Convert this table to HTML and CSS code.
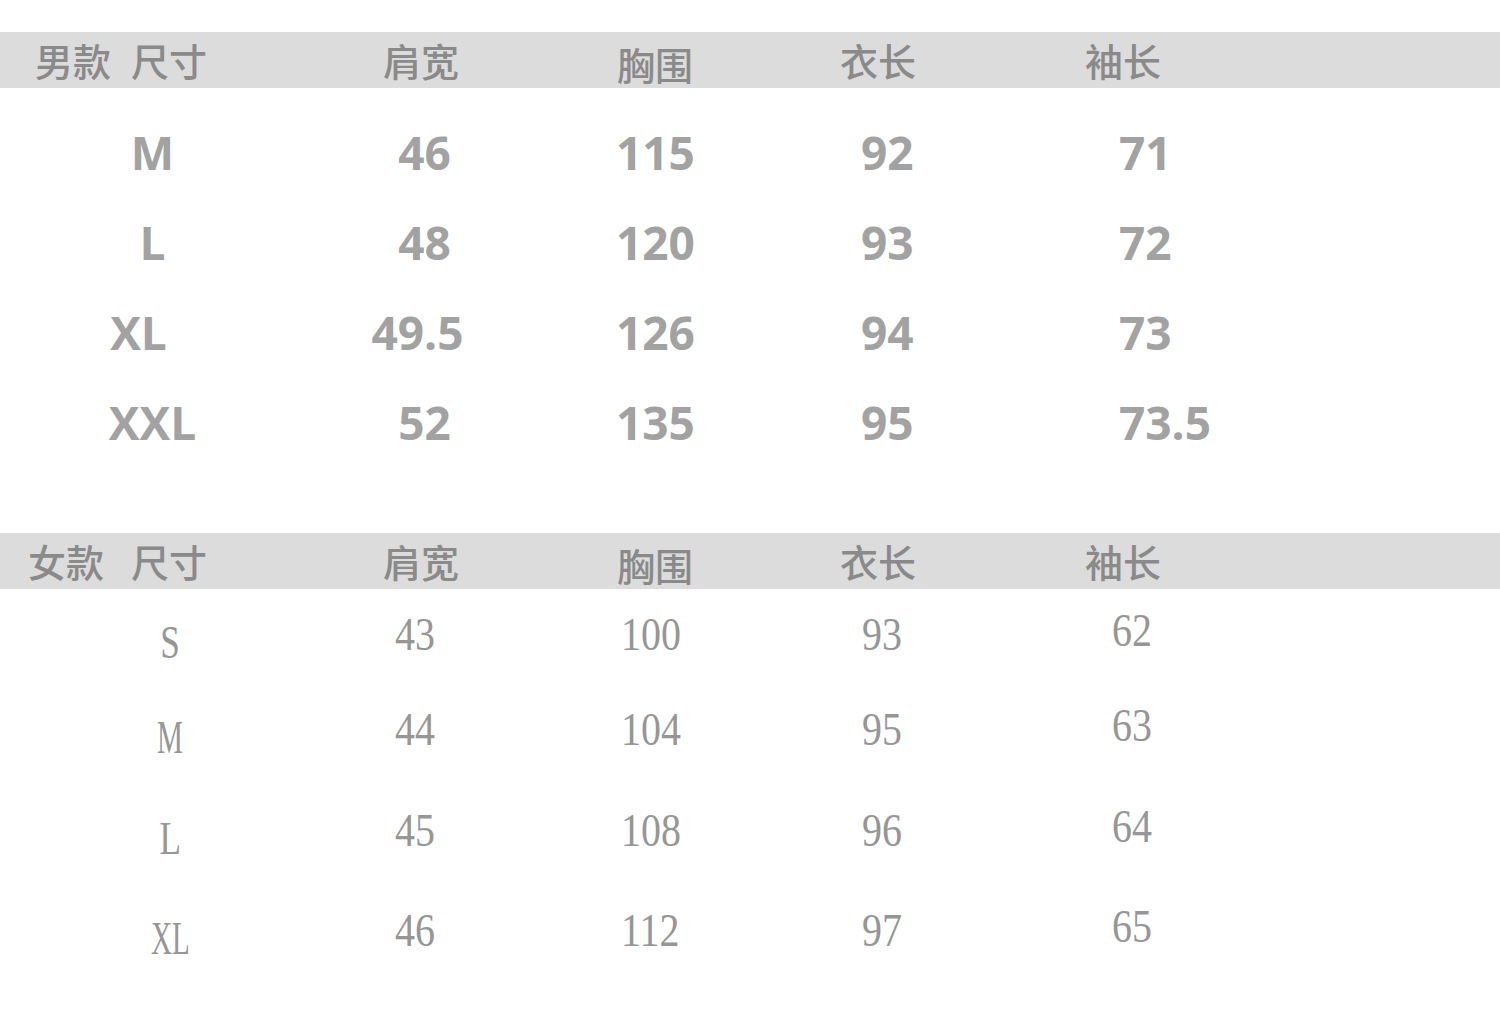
FILE: index.html
```html
<!DOCTYPE html>
<html lang="zh">
<head>
<meta charset="utf-8">
<title>尺码表</title>
<link rel="stylesheet" href="styles.css">
</head>
<body>
<main class="chart">
  <section class="table men">
    <div class="head">
      <div class="h-label"><span>男款</span><span>尺寸</span></div>
      <div class="h">肩宽</div>
      <div class="h h-low">胸围</div>
      <div class="h">衣长</div>
      <div class="h">袖长</div>
    </div>
    <div class="grid men-grid">
      <div class="c c1">M</div><div class="c c2">46</div><div class="c c3">115</div><div class="c c4">92</div><div class="c c5">71</div>
      <div class="c c1">L</div><div class="c c2">48</div><div class="c c3">120</div><div class="c c4">93</div><div class="c c5">72</div>
      <div class="c c1 xl">XL</div><div class="c c2 dec">49.5</div><div class="c c3">126</div><div class="c c4">94</div><div class="c c5">73</div>
      <div class="c c1">XXL</div><div class="c c2">52</div><div class="c c3">135</div><div class="c c4">95</div><div class="c c5">73.5</div>
    </div>
  </section>

  <section class="table women">
    <div class="head">
      <div class="h-label w-label"><span>女款</span><span>尺寸</span></div>
      <div class="h">肩宽</div>
      <div class="h h-low">胸围</div>
      <div class="h">衣长</div>
      <div class="h">袖长</div>
    </div>
    <div class="grid women-grid">
      <div class="c c1"><span class="t let wide">S</span></div><div class="c c2"><span class="t">43</span></div><div class="c c3"><span class="t">100</span></div><div class="c c4"><span class="t">93</span></div><div class="c c5"><span class="t">62</span></div>
      <div class="c c1"><span class="t let">M</span></div><div class="c c2"><span class="t">44</span></div><div class="c c3"><span class="t">104</span></div><div class="c c4"><span class="t">95</span></div><div class="c c5"><span class="t">63</span></div>
      <div class="c c1"><span class="t let wide">L</span></div><div class="c c2"><span class="t">45</span></div><div class="c c3"><span class="t">108</span></div><div class="c c4"><span class="t">96</span></div><div class="c c5"><span class="t">64</span></div>
      <div class="c c1"><span class="t let">XL</span></div><div class="c c2"><span class="t">46</span></div><div class="c c3"><span class="t">112</span></div><div class="c c4"><span class="t">97</span></div><div class="c c5"><span class="t">65</span></div>
    </div>
  </section>
</main>
</body>
</html>
```

FILE: styles.css
```css
html, body {
  margin: 0;
  padding: 0;
  background: #ffffff;
}

body {
  width: 1500px;
  height: 1030px;
  overflow: hidden;
  font-family: "Open Sans", "Noto Sans CJK SC", sans-serif;
}

.chart {
  padding-top: 32px;
  display: flex;
  flex-direction: column;
}

.women {
  margin-top: 66px;
}

/* header band */
.head {
  height: 56px;
  background: #dcdcdc;
  display: grid;
  grid-template-columns: 383px 234px 223px 245px 1fr;
  align-items: center;
  font-family: "Noto Sans CJK SC", sans-serif;
  font-weight: 500;
  font-size: 38px;
  line-height: 1;
  color: #8a8a8a;
}

.h-label {
  display: flex;
  gap: 20px;
  padding-left: 35px;
}

.w-label {
  padding-left: 28px;
  gap: 27px;
}

.h-low {
  padding-top: 7px;
}

/* data grids */
.grid {
  display: grid;
  line-height: 1;
}

.c {
  display: flex;
  align-items: center;
}

.men-grid {
  padding-top: 19px;
  grid-template-columns: 305px 311px 245px 258px 1fr;
  grid-auto-rows: 90px;
  font-family: "Open Sans", sans-serif;
  font-weight: 700;
  font-size: 46px;
  color: #a2a2a2;
}

.men-grid .c1 {
  justify-content: center;
}

.men-grid .c1.xl {
  padding-right: 28px;
}

.men-grid .c2 {
  justify-content: center;
  padding-right: 72px;
}

.men-grid .c2.dec {
  padding-right: 86px;
}

.women-grid {
  grid-template-columns: 395px 226px 241px 250px 1fr;
  grid-template-rows: 91px 98px 104px 96px;
  font-family: "Liberation Serif", serif;
  font-size: 47px;
  color: #969696;
}

.women-grid .c1 {
  justify-content: center;
  padding-right: 55px;
  padding-top: 16px;
}

.women-grid .c5 {
  padding-bottom: 8px;
}

.t {
  display: inline-block;
  transform: scaleX(0.85);
  transform-origin: left center;
}

.t.let {
  transform: scaleX(0.62);
  transform-origin: center center;
}

.t.let.wide {
  transform: scaleX(0.75);
}
```
